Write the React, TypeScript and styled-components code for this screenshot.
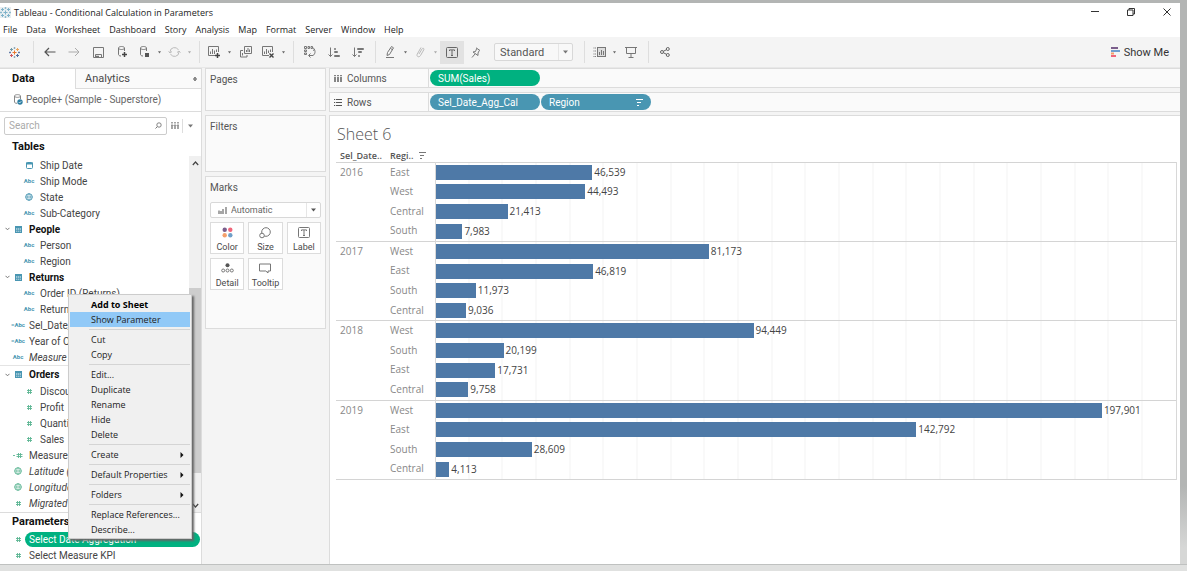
import React from "react";
import styled, { createGlobalStyle, css } from "styled-components";

const UI = `Roboto, "Liberation Sans", sans-serif`;
const SYSTEM = `"Open Sans", "Noto Sans", sans-serif`;
const LINE = "#dcdcdc";
const BLUE = "#4996b2";
const GREEN = "#00b180";

const GlobalStyle = createGlobalStyle`
  * { box-sizing: border-box; }
  body { margin: 0; background: #b4b6b5; font-family: ${UI}; font-size: 10px; color: #4a4a4a; }
  button, input, select { font: inherit; color: inherit; margin: 0; padding: 0; border: 0; background: none; border-radius: 0; outline: none; }
  ul { list-style: none; margin: 0; padding: 0; }
  h1, h2, h3 { margin: 0; font-weight: 400; }
  svg { display: block; flex: none; }
`;

const Desktop = styled.div`
  min-height: 100vh;
  display: flex;
  flex-direction: column;
  padding-top: 3px;
  background: linear-gradient(#b3b5b4 0, #b3b5b4 85%, #d6d7d6 96%);
`;
const Taskbar = styled.div`
  height: 7px;
  border-top: 1px solid #bfc1c0;
  background: #e0e1e0;
`;
const AppWindow = styled.div`
  flex: 1;
  display: flex;
  flex-direction: column;
  margin-right: 7px;
  background: #f4f4f4;
`;

/* Title bar and menus */
const TitleBar = styled.header`
  display: flex;
  align-items: center;
  gap: 10px;
  height: 18px;
  background: #fff;
  font-family: ${SYSTEM};
  font-size: 9px;
  color: #222;
`;
const TitleText = styled.h1`
  flex: 1;
  display: flex;
  align-items: center;
  gap: 3px;
  font-size: 9px;
`;
const WindowButton = styled.button`
  width: 26px;
  height: 18px;
  display: flex;
  align-items: center;
  justify-content: center;
`;
const MenuBar = styled.nav`
  display: flex;
  gap: 9px;
  height: 16px;
  padding-left: 3px;
  background: #fff;
  font-family: ${SYSTEM};
  font-size: 9px;
  color: #222;
`;
const MenuButton = styled.button`
  line-height: 17px;
`;

/* Toolbar */
const ToolbarRow = styled.div`
  display: flex;
  align-items: center;
  height: 31px;
  border-bottom: 1px solid #e8e8e8;
`;
const ToolButton = styled.button<{ $w?: number; $active?: boolean }>`
  width: ${(p) => p.$w ?? 24}px;
  height: 23px;
  display: flex;
  align-items: center;
  justify-content: center;
  background: ${(p) => (p.$active ? "#e2e2e2" : "none")};
`;
const Divider = styled.span`
  width: 1px;
  height: 22px;
  margin: 0 4px 0 5px;
  background: #dedede;
`;
const SelectBox = styled.div<{ $w?: number }>`
  display: grid;
  grid-template-columns: 1fr auto;
  align-items: center;
  width: ${(p) => (p.$w ? `${p.$w}px` : "auto")};
  border: 1px solid #d8d8d8;
  border-radius: 2px;
  background: #f8f8f8;
`;
const ZoomSelect = styled.select`
  appearance: none;
  height: 16px;
  padding-left: 5px;
  font-size: 11px;
  color: #555;
`;
const SelectArrow = styled.span`
  display: flex;
  align-items: center;
  justify-content: center;
  width: 14px;
  align-self: stretch;
  border-left: 1px solid #e6e6e6;
`;
const ZoomHolder = styled.div`
  margin: 0 6px;
`;
const ShowMe = styled.button`
  display: flex;
  align-items: center;
  gap: 4px;
  margin-left: auto;
  padding-right: 11px;
  font-size: 11px;
  color: #333;
`;

/* Body */
const Body = styled.div`
  flex: 1;
  display: grid;
  grid-template-columns: 202px 124px minmax(0, 1fr);
`;
const DataPane = styled.aside`
  position: relative;
  display: flex;
  flex-direction: column;
  background: #fff;
  border-right: 1px solid ${LINE};
`;
const Tabs = styled.div`
  display: grid;
  grid-template-columns: 75px 1fr;
  height: 21px;
`;
const Tab = styled.button<{ $active?: boolean }>`
  display: flex;
  align-items: center;
  justify-content: space-between;
  text-align: left;
  font-size: 11px;
  ${(p) =>
    p.$active
      ? css`
          padding: 0 0 1px 12px;
          font-weight: 700;
          color: #111;
          border-top: 1px solid ${LINE};
        `
      : css`
          padding: 0 4px 0 9px;
          background: #fafafa;
          border: 1px solid ${LINE};
          border-right: 0;
        `}
`;
const SourceRow = styled.button`
  display: flex;
  align-items: center;
  gap: 3px;
  height: 23px;
  padding: 0 0 1px 13px;
  border-bottom: 1px solid ${LINE};
  color: #666;
`;
const SearchRow = styled.div`
  display: flex;
  align-items: center;
  height: 26px;
  padding: 2px 4px 1px;
`;
const SearchField = styled.label`
  display: flex;
  align-items: center;
  width: 164px;
  height: 18px;
  padding: 0 4px;
  border: 1px solid #ccc;
  border-radius: 2px;
`;
const SearchInput = styled.input`
  flex: 1;
  min-width: 0;
  &::placeholder { color: #aaa; }
`;
const ViewDivider = styled.span`
  width: 1px;
  height: 14px;
  background: #ddd;
`;
const PaneTitle = styled.h2`
  padding-left: 12px;
  line-height: 18px;
  font-size: 11px;
  font-weight: 700;
  color: #111;
`;
const TreeArea = styled.div`
  flex: 1;
  display: grid;
  grid-template-columns: minmax(0, 1fr) 12px;
`;
const Tree = styled.ul`
  padding-top: 1px;
`;
const FieldRow = styled.li<{ $rule?: boolean }>`
  display: flex;
  align-items: center;
  height: ${(p) => (p.$rule ? 18 : 16)}px;
  ${(p) => p.$rule && css`border-top: 1px solid #e4e4e4;`}
`;
const FieldCaret = styled.span`
  width: 12px;
  padding-left: 5px;
`;
const FieldIcon = styled.span<{ $nested?: boolean }>`
  width: ${(p) => (p.$nested ? 28 : 17)}px;
  display: flex;
  justify-content: center;
  padding: ${(p) => (p.$nested ? "0 2px 0 8px" : "0 5px 0 0")};
`;
const FieldName = styled.span<{ $bold?: boolean; $italic?: boolean }>`
  white-space: nowrap;
  font-weight: ${(p) => (p.$bold ? 700 : 400)};
  font-style: ${(p) => (p.$italic ? "italic" : "normal")};
  color: ${(p) => (p.$bold ? "#111" : "#444")};
`;
const ScrollTrack = styled.div`
  display: flex;
  flex-direction: column;
  align-items: center;
  background: #f0f0f0;
`;
const ScrollArrow = styled.button`
  height: 14px;
  width: 12px;
  display: flex;
  align-items: center;
  justify-content: center;
`;
const ScrollThumb = styled.span`
  flex: 184;
  width: 12px;
  background: #cdcdcd;
`;
const ScrollSpace = styled.span<{ $grow: number }>`
  flex: ${(p) => p.$grow};
`;
const Parameters = styled.section`
  border-top: 1px solid ${LINE};
  padding-bottom: 1px;
`;
const SelectedField = styled.span`
  flex: 1;
  margin: 0 1px 0 -4px;
  padding-left: 4px;
  line-height: 15px;
  border-radius: 8px;
  background: ${GREEN};
  color: #fff;
`;

/* Context menu */
const ContextMenu = styled.ul`
  position: absolute;
  left: 68px;
  bottom: 25px;
  width: 124px;
  padding: 2px 1px 1px;
  border: 1px solid #ccc;
  background: #f0f0f0;
  box-shadow: 2px 2px 2px #666;
  font-family: ${SYSTEM};
  font-size: 9px;
  color: #222;
`;
const MenuItem = styled.button<{ $bold?: boolean; $active?: boolean }>`
  display: flex;
  align-items: center;
  justify-content: space-between;
  width: 100%;
  height: 15px;
  padding: 0 6px 0 21px;
  font-weight: ${(p) => (p.$bold ? 700 : 400)};
  background: ${(p) => (p.$active ? "#91c9f7" : "none")};
  color: ${(p) => (p.$bold ? "#000" : "#222")};
`;
const MenuRule = styled.li`
  height: 1px;
  margin: 2px 0 2px 19px;
  background: #d4d4d4;
`;

/* Cards */
const CardColumn = styled.div`
  display: flex;
  flex-direction: column;
  gap: 4px;
  padding-left: 3px;
`;
const Card = styled.section<{ $h: number }>`
  min-height: ${(p) => p.$h}px;
  padding: 4px;
  border: 1px solid ${LINE};
  background: #fafafa;
`;
const CardTitle = styled.h2`
  font-size: 10px;
  line-height: 14px;
  color: #555;
`;
const MarkType = styled(SelectBox)`
  grid-template-columns: auto 1fr auto;
  margin: 7px 0 4px;
  padding-left: 7px;
  background: #fff;
`;
const MarkSelect = styled.select`
  appearance: none;
  height: 14px;
  padding-left: 4px;
  font-size: 9px;
  color: #666;
`;
const MarkGrid = styled.div`
  display: grid;
  grid-template-columns: repeat(3, 1fr);
  gap: 4px;
`;
const MarkButton = styled.button`
  display: flex;
  flex-direction: column;
  align-items: center;
  justify-content: space-between;
  height: 32px;
  padding: 4px 0 0;
  border: 1px solid ${LINE};
  background: #fff;
  font-size: 9px;
  line-height: 11px;
`;

/* Shelves and view */
const Workspace = styled.main`
  display: flex;
  flex-direction: column;
  gap: 3px;
  padding-left: 3px;
`;
const Shelves = styled.div`
  display: flex;
  flex-direction: column;
  gap: 4px;
`;
const Shelf = styled.div`
  display: grid;
  grid-template-columns: 99px 1fr;
  height: 20px;
  border: 1px solid ${LINE};
  border-right: 0;
  background: #fafafa;
`;
const ShelfLabel = styled.div`
  display: flex;
  align-items: center;
  gap: 5px;
  padding-left: 4px;
  border-right: 1px solid ${LINE};
  color: #555;
`;
const Pills = styled.div`
  display: flex;
  align-items: center;
  gap: 1px;
  padding-left: 1px;
`;
const Pill = styled.button<{ $color: string }>`
  display: flex;
  align-items: center;
  justify-content: space-between;
  width: 110px;
  height: 16px;
  padding: 0 8px;
  border-radius: 8px;
  background: ${(p) => p.$color};
  color: #fff;
`;
const View = styled.section`
  flex: 1;
  padding: 7px 3px 0 6px;
  border: 1px solid ${LINE};
  border-width: 1px 0 0 1px;
  background: #fff;
`;
const SheetTitle = styled.h2`
  padding-left: 1px;
  font-family: ${SYSTEM};
  font-size: 16px;
  font-weight: 300;
  line-height: 22px;
  color: #555;
`;
const Chart = styled.table`
  width: 100%;
  height: 335px;
  border-collapse: collapse;
  table-layout: fixed;
  font-family: ${SYSTEM};
  border-bottom: 1px solid #d4d4d4;
`;
const YearCol = styled.col`width: 50px;`;
const RegionCol = styled.col`width: 49px;`;
const HeadRow = styled.tr`height: 17px;`;
const HeadCell = styled.th`
  padding: 0 0 0 4px;
  text-align: left;
  vertical-align: bottom;
  font-size: 9px;
  font-weight: 600;
  line-height: 13px;
  color: #555;
  white-space: nowrap;
`;
const HeadLabel = styled.span`
  display: flex;
  align-items: center;
  gap: 6px;
`;
const ChartRow = styled.tr<{ $first: boolean }>`
  border-top: ${(p) => (p.$first ? "1px solid #d4d4d4" : "0")};
`;
const LabelCell = styled.th`
  padding: 1px 0 0 4px;
  text-align: left;
  vertical-align: top;
  font-weight: 400;
  font-size: 10px;
  line-height: 17px;
  color: #888;
`;
const BarCell = styled.td`
  padding: 0;
  border: 1px solid #d8d8d8;
  border-width: 0 1px;
  background: repeating-linear-gradient(90deg, transparent 0, transparent calc(4.55% - 1px), #f3f3f3 calc(4.55% - 1px), #f3f3f3 4.55%);
`;
const BarLine = styled.div`
  display: flex;
  align-items: center;
  gap: 2px;
`;
const Bar = styled.span`
  height: 15px;
  background: #4e79a7;
`;
const BarValue = styled.span`
  line-height: 15px;
  color: #444;
`;

const Caret = ({ c = "#777" }: { c?: string }) => (
  <svg width="5" height="4" viewBox="0 0 5 4"><path d="M0 .5h5L2.5 3.5z" fill={c} /></svg>
);
const CaretButton = ({ label, c }: { label: string; c?: string }) => (
  <ToolButton $w={10} aria-label={label}>
    <svg width="3" height="3" viewBox="0 0 3 3"><path d="M0 .3h3L1.5 2.5z" fill={c ?? "#666"} /></svg>
  </ToolButton>
);

const Glyph = ({ w = 14, h = 14, c = "#777", children }: { w?: number; h?: number; c?: string; children: React.ReactNode }) => (
  <svg width={w} height={h} viewBox={`0 0 ${w} ${h}`} fill="none" stroke={c} strokeWidth="1">{children}</svg>
);

const Logo = ({ mono }: { mono?: boolean }) => {
  const cols = mono
    ? ["#7fb2c9", "#7fb2c9", "#7fb2c9", "#7fb2c9", "#7fb2c9", "#7fb2c9"]
    : ["#e8762d", "#7f9fb0", "#d0545f", "#4f6b9c", "#eda55c", "#7199a6"];
  return (
    <Glyph w={11} h={11}>
      {mono && <path d="M0 0h11v11H0z" fill="#e8eef1" stroke="none" />}
      <path d="M5.5 3.5v4M3.5 5.5h4" stroke={cols[0]} />
      <path d="M2.5 1v3M1 2.5h3" stroke={cols[5]} />
      <path d="M8.5 1v3M7 2.5h3" stroke={cols[4]} />
      <path d="M2.5 7v3M1 8.5h3" stroke={cols[2]} />
      <path d="M8.5 7v3M7 8.5h3" stroke={cols[3]} />
      <path d="M5.5 0v2M4.5 1h2M5.5 9v2M4.5 10h2" stroke={cols[1]} strokeWidth=".8" />
      <path d="M1 4.5v2M0 5.5h2M10 4.5v2M9 5.5h2" stroke={cols[3]} strokeWidth=".8" />
    </Glyph>
  );
};

const SortIcon = ({ c = "#777" }: { c?: string }) => (
  <Glyph w={7} h={7} c={c}><path d="M0 .5h7M1 3.5h4M1 6.5h2" /></Glyph>
);
const Cylinder = () => <path d="M3.5 3v6.5c0 .8 1 1.5 2.5 1.5M9.5 3v3M3.5 3c0-2 6-2 6 0s-6 2-6 0" />;

type Kind = "abc" | "calc" | "date" | "globe" | "hash" | "calchash" | "table" | "globeG";

const AbcText = styled.span`
  font-size: 6px;
  font-weight: 700;
  line-height: 8px;
  color: ${BLUE};
`;
const TypeIcon = ({ kind }: { kind: Kind }) => {
  const g = "#5cb593";
  switch (kind) {
    case "abc": return <AbcText>Abc</AbcText>;
    case "calc": return <AbcText>=Abc</AbcText>;
    case "date":
      return <Glyph w={7} h={7} c={BLUE}><rect x=".5" y=".5" width="6" height="6" rx="1" /><path d="M0 1.5h7" strokeWidth="2" /></Glyph>;
    case "globe":
    case "globeG":
      return (
        <Glyph w={8} h={8} c={kind === "globe" ? BLUE : g}>
          <circle cx="4" cy="4" r="3.3" /><ellipse cx="4" cy="4" rx="1.3" ry="3.3" strokeWidth=".7" /><path d="M.7 4h6.6" strokeWidth=".7" />
        </Glyph>
      );
    case "hash":
      return <Glyph w={7} h={7} c={g}><path d="M2.500 1v5M4.500 1v5M1 2.500h5M1 4.500h5" strokeWidth=".9" /></Glyph>;
    case "calchash":
      return <Glyph w={10} h={7} c={g}><path d="M0 3.500h2M5.500 1v5M7.500 1v5M3.500 2.500h6M3.500 4.500h6" strokeWidth=".9" /></Glyph>;
    case "table":
      return <Glyph w={7} h={7} c={BLUE}><rect x=".5" y=".5" width="6" height="6" fill="#9cc6d6" /><path d="M0 1h7" strokeWidth="2" /><path d="M2.500 2v5M4.500 2v5M0 4.500h7" strokeWidth=".6" /></Glyph>;
  }
};

type Field = { name: string; kind: Kind; level: 0 | 1 | 2; italic?: boolean; rule?: boolean };
const fields: Field[] = [
  { name: "Ship Date", kind: "date", level: 2 },
  { name: "Ship Mode", kind: "abc", level: 2 },
  { name: "State", kind: "globe", level: 2 },
  { name: "Sub-Category", kind: "abc", level: 2 },
  { name: "People", kind: "table", level: 0 },
  { name: "Person", kind: "abc", level: 2 },
  { name: "Region", kind: "abc", level: 2 },
  { name: "Returns", kind: "table", level: 0 },
  { name: "Order ID (Returns)", kind: "abc", level: 2 },
  { name: "Returned", kind: "abc", level: 2 },
  { name: "Sel_Date_Agg_Cal", kind: "calc", level: 1 },
  { name: "Year of Order Date", kind: "calc", level: 1 },
  { name: "Measure Names", kind: "abc", level: 1, italic: true },
  { name: "Orders", kind: "table", level: 0, rule: true },
  { name: "Discount", kind: "hash", level: 2 },
  { name: "Profit", kind: "hash", level: 2 },
  { name: "Quantity", kind: "hash", level: 2 },
  { name: "Sales", kind: "hash", level: 2 },
  { name: "Measure KPI", kind: "calchash", level: 1 },
  { name: "Latitude (generated)", kind: "globeG", level: 1, italic: true },
  { name: "Longitude (generated)", kind: "globeG", level: 1, italic: true },
  { name: "Migrated Data", kind: "hash", level: 1, italic: true },
];

const menu: (null | { label: string; bold?: boolean; active?: boolean; sub?: boolean })[] = [
  { label: "Add to Sheet", bold: true },
  { label: "Show Parameter", active: true },
  null,
  { label: "Cut" },
  { label: "Copy" },
  null,
  { label: "Edit..." },
  { label: "Duplicate" },
  { label: "Rename" },
  { label: "Hide" },
  { label: "Delete" },
  null,
  { label: "Create", sub: true },
  null,
  { label: "Default Properties", sub: true },
  null,
  { label: "Folders", sub: true },
  null,
  { label: "Replace References..." },
  { label: "Describe..." },
];

const AXIS_MAX = 219900;
const data: { year: string; rows: [string, number][] }[] = [
  { year: "2016", rows: [["East", 46539], ["West", 44493], ["Central", 21413], ["South", 7983]] },
  { year: "2017", rows: [["West", 81173], ["East", 46819], ["South", 11973], ["Central", 9036]] },
  { year: "2018", rows: [["West", 94449], ["South", 20199], ["East", 17731], ["Central", 9758]] },
  { year: "2019", rows: [["West", 197901], ["East", 142792], ["South", 28609], ["Central", 4113]] },
];

const Toolbar = () => (
  <ToolbarRow>
    <ToolButton $w={28} aria-label="Start page"><Logo /></ToolButton>
    <Divider />
    <ToolButton aria-label="Undo"><Glyph w={12} h={10} c="#555"><path d="M1 5h10.500M5 1L1 5l4 4" strokeWidth="1.200" /></Glyph></ToolButton>
    <ToolButton aria-label="Redo"><Glyph w={12} h={10} c="#aaa"><path d="M.5 5H11M7 1l4 4-4 4" /></Glyph></ToolButton>
    <ToolButton aria-label="Save"><Glyph w={11} h={11}><path d="M.5.5h10v10H.5zM2.500 10V7.500h6V10" /><path d="M3 9.500h3" strokeWidth="1.500" /></Glyph></ToolButton>
    <ToolButton aria-label="New data source"><Glyph><Cylinder /><path d="M9.500 7v5M7 9.500h5" stroke="#444" strokeWidth="1.500" /></Glyph></ToolButton>
    <ToolButton $w={20} aria-label="Pause updates"><Glyph><Cylinder /><path d="M8 8h4v4H8z" fill="#555" stroke="none" /></Glyph></ToolButton>
    <CaretButton label="Pause options" />
    <ToolButton $w={20} aria-label="Refresh"><Glyph w={13} h={12} c="#bbb"><path d="M2 6a4.500 4.500 0 0 1 8.500-2M11 6a4.500 4.500 0 0 1-8.500 2M.5 5.500L2 7l2-1.500M12.500 6.500L11 5 9 6.500" /></Glyph></ToolButton>
    <CaretButton label="Refresh options" c="#aaa" />
    <Divider />
    <ToolButton $w={20} aria-label="New worksheet"><Glyph><path d="M8 10.500H1.500v-9h10V7M3.500 9V6.500M5.500 9V4M7.500 9V5.500M9.500 7V4.500" /><path d="M10.500 8v5M8 10.500h5" stroke="#444" strokeWidth="1.500" /></Glyph></ToolButton>
    <CaretButton label="Worksheet options" />
    <ToolButton aria-label="Duplicate"><Glyph w={12} h={12}><path d="M4.500.5h7v7h-7zM6.500 6V4M8 6V2M9.500 6V3.500M3 4.500H.5v6.500h6.500V9M2.500 9.500V7" /></Glyph></ToolButton>
    <ToolButton $w={20} aria-label="Clear sheet"><Glyph><path d="M8 10.500H1.500v-9h10V7M3.500 9V6.500M5.500 9V4M7.500 8V5.500M9.500 7V4.500" /><path d="M8.500 8.500l4 4M12.500 8.500l-4 4" stroke="#444" strokeWidth="1.400" /></Glyph></ToolButton>
    <CaretButton label="Clear options" />
    <Divider />
    <ToolButton aria-label="Swap rows and columns"><Glyph w={12} h={12}><path d="M.5.500h2v2h-2zM4 .5h1.500v2H4zM7 .5h1.500v2H7zM.5 4h2v1.500h-2zM.5 7h2v1.500h-2z" /><path d="M10 3c1.500 1.500 1.500 5-1 6.500H5M8.500 1.500L10.500 3l-1 2M6.500 7.500l-2 2 2 2" /></Glyph></ToolButton>
    <ToolButton aria-label="Sort ascending"><Glyph w={12} h={11}><path d="M2.500.5v9M.5 7.500l2 2 2-2" /><path d="M6.500 1.500h1v1h-1zM6.500 4.500h3v1h-3zM6.500 8.500h5v1h-5z" /></Glyph></ToolButton>
    <ToolButton aria-label="Sort descending"><Glyph w={12} h={11}><path d="M2.500.5v9M.5 7.500l2 2 2-2" /><path d="M5.500 1.500h6v1h-6zM6.500 4.500h3v1h-3zM6.500 8.500h1v1h-1z" /></Glyph></ToolButton>
    <Divider />
    <ToolButton $w={20} aria-label="Highlight"><Glyph w={10} h={12}><path d="M6.500.5l2 1.300-4 6.700-2.500 1 .5-3zM5.500 2.500l2 1.200M1 11.500h8" /></Glyph></ToolButton>
    <CaretButton label="Highlight options" />
    <ToolButton $w={20} aria-label="Group members"><Glyph w={9} h={12} c="#bbb"><path d="M3 8l3-5c.8-1.500 2.500-.5 1.800.8L4.500 9.500C3 12 0 10.500 1.300 8L5 1.500" /></Glyph></ToolButton>
    <CaretButton label="Group options" c="#aaa" />
    <ToolButton $active aria-label="Show mark labels"><Glyph w={12} h={11} c="#666"><rect x=".5" y=".5" width="11" height="10" rx="1" /><path d="M3.500 4V2.900h5V4M6 3v5.500M5 8.500h2" /></Glyph></ToolButton>
    <ToolButton aria-label="Fix axes"><Glyph w={10} h={11}><path d="M5 .8l4 2.700M5.700 1.500L4.500 4.500 2 5l5 3.500V6l1.300-2.500M4 7L1 10.500" /></Glyph></ToolButton>
    <ZoomHolder>
      <SelectBox $w={79}>
        <ZoomSelect aria-label="Fit"><option>Standard</option></ZoomSelect>
        <SelectArrow><Caret /></SelectArrow>
      </SelectBox>
    </ZoomHolder>
    <Divider />
    <ToolButton $w={20} aria-label="Show or hide cards"><Glyph w={13} h={10}><rect x="4.500" y=".5" width="8" height="9" fill="#ddd" /><path d="M6.500 8V5M8.500 8V3M10.500 8V4" /><path d="M.5 1h2.500M.5 4h2.500M.5 7h2.500M.5 9.500h2.500" strokeDasharray="1 .6" /></Glyph></ToolButton>
    <CaretButton label="Card options" />
    <ToolButton aria-label="Presentation mode"><Glyph w={12} h={11}><path d="M0 .5h12M1.500.5v6h9v-6M6 6.500v3.500M3.500 10.500h5" /></Glyph></ToolButton>
    <Divider />
    <ToolButton aria-label="Share"><Glyph w={10} h={10} c="#666"><circle cx="2" cy="5" r="1.500" /><circle cx="7.800" cy="2" r="1.500" /><circle cx="7.800" cy="8" r="1.500" /><path d="M3.300 4.300l3.200-1.600M3.300 5.700l3.200 1.600" /></Glyph></ToolButton>
    <ShowMe>
      <svg width="9" height="10" viewBox="0 0 9 10">
        <path d="M0 0h7v2H0z" fill="#7b5e8c" /><path d="M0 3h9v2H0z" fill="#6f9fd0" />
        <path d="M0 5.500h3v2H0z" fill="#f4a06b" /><path d="M0 8h5v2H0z" fill="#f0667a" />
      </svg>
      Show Me
    </ShowMe>
  </ToolbarRow>
);

const FieldList = () => (
  <Tree>
    {fields.map((f) => (
      <FieldRow key={f.name} $rule={f.rule}>
        <FieldCaret>{f.level === 0 && <Glyph w={5} h={4}><path d="M.5.8l2 2 2-2" /></Glyph>}</FieldCaret>
        <FieldIcon $nested={f.level === 2}><TypeIcon kind={f.kind} /></FieldIcon>
        <FieldName $bold={f.level === 0} $italic={f.italic}>{f.name}</FieldName>
      </FieldRow>
    ))}
  </Tree>
);

const DataSide = () => (
  <DataPane>
    <Tabs>
      <Tab $active>Data</Tab>
      <Tab>Analytics<Glyph w={4} h={6} c="#888"><path d="M.5 2.500L2 1l1.500 1.500zM.5 3.500L2 5l1.500-1.500z" /></Glyph></Tab>
    </Tabs>
    <SourceRow>
      <Glyph w={10} h={11} c="#888">
        <path d="M1.500 2v6c0 .8 1 1.300 2.500 1.300M7.500 2v3M1.500 2c0-1.800 6-1.800 6 0s-6 1.800-6 0" />
        <circle cx="7" cy="8" r="2.700" fill="#2f7fa3" stroke="none" /><path d="M5.700 8l1 1 1.600-1.800" stroke="#fff" strokeWidth=".7" />
      </Glyph>
      People+ (Sample - Superstore)
    </SourceRow>
    <SearchRow>
      <SearchField>
        <SearchInput placeholder="Search" aria-label="Search fields" />
        <Glyph w={7} h={7}><circle cx="4" cy="3" r="2.200" strokeWidth=".9" /><path d="M2.300 4.700L.5 6.500" /></Glyph>
      </SearchField>
      <ToolButton $w={15} aria-label="View as"><Glyph w={8} h={7} c="#888"><path d="M1 0v1.500M4 0v1.500M7 0v1.500M1 2.500v4.500M4 2.500v4.500M7 2.500v4.500" strokeWidth="1.500" /><path d="M0 3.500h8" strokeWidth=".5" /></Glyph></ToolButton>
      <ViewDivider />
      <ToolButton $w={14} aria-label="Pane menu"><Caret /></ToolButton>
    </SearchRow>
    <PaneTitle>Tables</PaneTitle>
    <TreeArea>
      <FieldList />
      <ScrollTrack>
        <ScrollArrow aria-label="Scroll up"><Glyph w={7} h={5} c="#444"><path d="M.8 4l2.700-3 2.700 3" strokeWidth="1.200" /></Glyph></ScrollArrow>
        <ScrollSpace $grow={118} />
        <ScrollThumb />
        <ScrollSpace $grow={25} />
        <ScrollArrow aria-label="Scroll down"><Glyph w={7} h={5} c="#444"><path d="M.8 1l2.700 3 2.700-3" strokeWidth="1.200" /></Glyph></ScrollArrow>
      </ScrollTrack>
    </TreeArea>
    <Parameters>
      <PaneTitle>Parameters</PaneTitle>
      <ul>
        <FieldRow><FieldCaret /><FieldIcon><TypeIcon kind="hash" /></FieldIcon><SelectedField>Select Date Aggregation</SelectedField></FieldRow>
        <FieldRow><FieldCaret /><FieldIcon><TypeIcon kind="hash" /></FieldIcon><FieldName>Select Measure KPI</FieldName></FieldRow>
      </ul>
    </Parameters>
    <ContextMenu>
      {menu.map((m, i) =>
        m ? (
          <li key={i}>
            <MenuItem $bold={m.bold} $active={m.active}>
              {m.label}
              {m.sub && <svg width="4" height="6" viewBox="0 0 4 6"><path d="M.5 0L3.500 3l-3 3z" fill="#111" /></svg>}
            </MenuItem>
          </li>
        ) : (
          <MenuRule key={i} role="separator" />
        )
      )}
    </ContextMenu>
  </DataPane>
);

const Cards = () => (
  <CardColumn>
    <Card $h={43}><CardTitle>Pages</CardTitle></Card>
    <Card $h={57}><CardTitle>Filters</CardTitle></Card>
    <Card $h={153}>
      <CardTitle>Marks</CardTitle>
      <MarkType>
        <Glyph w={9} h={7}><path d="M1 7V3.500M3 7V4M5 7V2M8 7V0" strokeWidth="1.300" /></Glyph>
        <MarkSelect aria-label="Mark type"><option>Automatic</option></MarkSelect>
        <SelectArrow><Caret c="#555" /></SelectArrow>
      </MarkType>
      <MarkGrid>
        <MarkButton>
          <svg width="11" height="11" viewBox="0 0 11 11"><circle cx="2.700" cy="2.700" r="2.200" fill="#7b5e8c" /><circle cx="8.300" cy="2.700" r="2.200" fill="#f0667a" /><circle cx="2.700" cy="8.300" r="2.200" fill="#f4a06b" /><circle cx="8.300" cy="8.300" r="2.200" fill="#6f9fc8" /></svg>
          Color
        </MarkButton>
        <MarkButton><Glyph w={12} h={12}><circle cx="7" cy="5" r="4.300" /><circle cx="3" cy="8.500" r="2.300" fill="#fff" /></Glyph>Size</MarkButton>
        <MarkButton><Glyph w={12} h={11}><rect x=".5" y=".5" width="11" height="10" rx="1" /><path d="M3.500 4V2.900h5V4M6 3v5.500M5 8.500h2" /></Glyph>Label</MarkButton>
        <MarkButton><Glyph w={13} h={10}><circle cx="6.500" cy="2.200" r="2" fill="#555" stroke="none" /><circle cx="2.200" cy="7.500" r="1.500" /><circle cx="6.500" cy="7.500" r="1.500" /><circle cx="10.800" cy="7.500" r="1.500" /></Glyph>Detail</MarkButton>
        <MarkButton><Glyph w={12} h={11}><path d="M.5 1h11v7H9v2L6.800 8H.5z" /></Glyph>Tooltip</MarkButton>
      </MarkGrid>
    </Card>
  </CardColumn>
);

const BarChart = () => (
  <Chart>
    <colgroup><YearCol /><RegionCol /><col /></colgroup>
    <thead>
      <HeadRow>
        <HeadCell scope="col">Sel_Date..</HeadCell>
        <HeadCell scope="col"><HeadLabel>Regi..<SortIcon /></HeadLabel></HeadCell>
        <td />
      </HeadRow>
    </thead>
    <tbody>
      {data.map((g) =>
        g.rows.map(([region, value], i) => (
          <ChartRow key={g.year + region} $first={i === 0}>
            {i === 0 && <LabelCell scope="rowgroup" rowSpan={4}>{g.year}</LabelCell>}
            <LabelCell scope="row">{region}</LabelCell>
            <BarCell>
              <BarLine>
                <Bar style={{ width: `${(value / AXIS_MAX) * 100}%` }} />
                <BarValue>{value.toLocaleString("en-US")}</BarValue>
              </BarLine>
            </BarCell>
          </ChartRow>
        ))
      )}
    </tbody>
  </Chart>
);

export default function App() {
  return (
    <Desktop>
      <GlobalStyle />
      <AppWindow>
        <TitleBar>
          <TitleText><Logo mono />Tableau - Conditional Calculation in Parameters</TitleText>
          <WindowButton aria-label="Minimize"><Glyph w={8} h={8} c="#333"><path d="M0 3.500h8" /></Glyph></WindowButton>
          <WindowButton aria-label="Restore"><Glyph w={8} h={8} c="#333"><path d="M.5 2h5.500v5.500H.5zM2 2V.5h5.500V6H6" /></Glyph></WindowButton>
          <WindowButton aria-label="Close"><Glyph w={8} h={8} c="#333"><path d="M.5.5l7 7M7.500.5l-7 7" /></Glyph></WindowButton>
        </TitleBar>
        <MenuBar>
          {["File", "Data", "Worksheet", "Dashboard", "Story", "Analysis", "Map", "Format", "Server", "Window", "Help"].map((m) => (
            <MenuButton key={m}>{m}</MenuButton>
          ))}
        </MenuBar>
        <Toolbar />
        <Body>
          <DataSide />
          <Cards />
          <Workspace>
            <Shelves>
              <Shelf>
                <ShelfLabel><Glyph w={8} h={7} c="#555"><path d="M1 2v5M4 2v5M7 2v5M1 0v1.200M4 0v1.200M7 0v1.200" strokeWidth="1.400" /></Glyph>Columns</ShelfLabel>
                <Pills><Pill $color={GREEN}>SUM(Sales)</Pill></Pills>
              </Shelf>
              <Shelf>
                <ShelfLabel><Glyph w={8} h={7} c="#555"><path d="M2 .5H8M2 3.500H8M2 6.500H8M0 .5h1.200M0 3.500h1.200M0 6.500h1.200" strokeWidth="1.200" /></Glyph>Rows</ShelfLabel>
                <Pills>
                  <Pill $color={BLUE}>Sel_Date_Agg_Cal</Pill>
                  <Pill $color={BLUE}>Region<SortIcon c="#fff" /></Pill>
                </Pills>
              </Shelf>
            </Shelves>
            <View>
              <SheetTitle>Sheet 6</SheetTitle>
              <BarChart />
            </View>
          </Workspace>
        </Body>
      </AppWindow>
      <Taskbar />
    </Desktop>
  );
}
